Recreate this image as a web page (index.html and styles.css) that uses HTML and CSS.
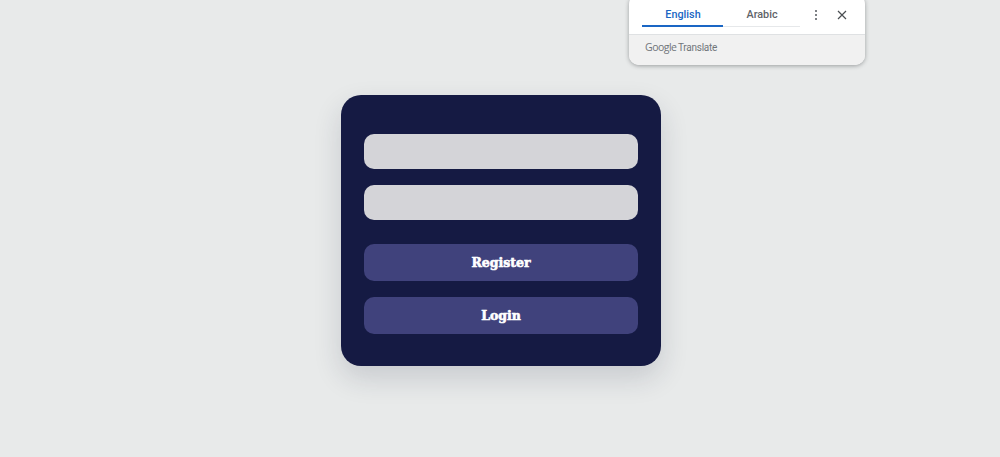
FILE: index.html
```html
<!DOCTYPE html>
<html lang="en">
<head>
    <meta charset="UTF-8">
    <title>Login</title>
    <link rel="stylesheet" href="styles.css">
</head>
<body>
    <form class="login-card">
        <input class="field" type="text" aria-label="Username">
        <input class="field" type="password" aria-label="Password">
        <button class="action register-btn" type="button">Register</button>
        <button class="action" type="button">Login</button>
    </form>

    <div class="translate-popup">
        <div class="translate-top">
            <div class="tabs">
                <span class="tab active">English</span>
                <span class="tab">Arabic</span>
            </div>
            <svg class="icon-more" width="4" height="12" viewBox="0 0 4 12">
                <circle cx="2" cy="2" r="1.1"/>
                <circle cx="2" cy="6" r="1.1"/>
                <circle cx="2" cy="10" r="1.1"/>
            </svg>
            <svg class="icon-close" width="10" height="10" viewBox="0 0 10 10">
                <path d="M1 1 L9 9 M9 1 L1 9"/>
            </svg>
        </div>
        <div class="translate-foot">
            <span class="google">Google</span>
            <span class="translate-word">Translate</span>
        </div>
    </div>
</body>
</html>
```

FILE: styles.css
```css
/* General */
body {
    margin: 0;
    height: 457px;
    overflow: hidden;
    background-color: #e8eaea;
    display: flex;
    justify-content: center;
    align-items: flex-start;
    font-family: 'Roboto', 'Liberation Sans', sans-serif;
}

/* Login card */
.login-card {
    box-sizing: border-box;
    width: 320px;
    height: 271px;
    margin-top: 95px;
    margin-left: 2px;
    padding: 39px 23px 0;
    display: flex;
    flex-direction: column;
    background-color: #151a43;
    border-radius: 20px;
    box-shadow: 0 12px 28px rgba(30, 40, 60, 0.16);
}

.field {
    box-sizing: border-box;
    width: 274px;
    height: 35px;
    margin: 0 0 16px;
    padding: 0 12px;
    border: none;
    border-radius: 10px;
    background-color: #d4d4d8;
}

.action {
    width: 274px;
    height: 37px;
    margin: 0 0 16px;
    padding: 0;
    border: none;
    border-radius: 10px;
    background-color: #40427c;
    color: #ffffff;
    font-family: 'DejaVu Serif', serif;
    font-size: 12.5px;
    font-weight: bold;
    -webkit-text-stroke: 0.6px #ffffff;
}

.register-btn {
    margin-top: 8px;
}

/* Translate popup */
.translate-popup {
    position: absolute;
    top: -6px;
    left: 629px;
    box-sizing: border-box;
    width: 236px;
    height: 71px;
    background-color: #ffffff;
    border-radius: 10px;
    box-shadow: 0 1px 4px rgba(60, 64, 67, 0.45);
    overflow: hidden;
}

.translate-top {
    height: 41px;
    display: flex;
    align-items: flex-start;
    box-sizing: border-box;
    padding-left: 13px;
    border-bottom: 1px solid #dfe1e3;
}

.tabs {
    display: flex;
    width: 158px;
    height: 32px;
    border-bottom: 1px solid #e6e8ea;
}

.tab {
    box-sizing: border-box;
    width: 77px;
    height: 32px;
    padding-top: 14px;
    padding-left: 1px;
    text-align: center;
    font-size: 10.8px;
    font-weight: 500;
    line-height: 13px;
    color: #5f6368;
}

.tab.active {
    width: 81px;
    height: 33px;
    color: #1a66c4;
    border-bottom: 2px solid #1a66c4;
}

.icon-more {
    margin: 15px 0 0 14px;
    fill: #5f6368;
}

.icon-close {
    margin: 16px 0 0 19px;
    fill: none;
    stroke: #4a4e52;
    stroke-width: 1.2;
}

.translate-foot {
    height: 30px;
    background-color: #f1f1f1;
    padding: 6px 0 0 16px;
    box-sizing: border-box;
    font-size: 10px;
    line-height: 12px;
    color: #70757a;
}

.google {
    font-family: 'Open Sans', 'Liberation Sans', sans-serif;
    font-size: 10.5px;
    letter-spacing: -0.5px;
}

.translate-word {
    letter-spacing: -0.25px;
    margin-left: -1px;
}
```
